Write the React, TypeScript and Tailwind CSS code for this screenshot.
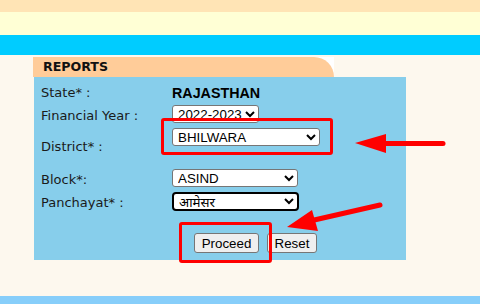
const selectCls =
  'border border-[#767676] rounded-[3px] bg-white text-black text-[13.33px] font-["Liberation_Sans","Noto_Sans",sans-serif] pl-[1px]';

export default function App() {
  return (
    <div className="relative w-[480px] h-[304px] bg-[#fdf8ee] flex flex-col overflow-hidden font-['DejaVu_Sans',Verdana,sans-serif]">
      <div className="h-[12px] bg-[#ffe4b5]" />
      <div className="h-[23px] bg-[#ffffd5]" />
      <div className="h-[20px] bg-[#00ccff]" />

      {/* tab */}
      <div className="ml-[33px] mt-[2px] w-[301px] h-[20px] bg-white">
        <div className="h-full bg-[#ffcc99] rounded-tr-[21px] pl-[10px] text-[12.6px] leading-[20px] font-bold text-[#111]">
          REPORTS
        </div>
      </div>

      {/* form panel */}
      <div className="ml-[34px] w-[372px] h-[183px] bg-[#87ceeb] pl-[7px] pt-[7px] text-[13px] text-[#1a1a1a]">
        <div className="grid grid-cols-[131px_1fr]">
          <div className="leading-[18px]">State* :</div>
          <div className="leading-[18px] text-[14.3px] font-bold font-['Liberation_Sans',Arial,sans-serif] text-black">
            RAJASTHAN
          </div>
        </div>

        <div className="grid grid-cols-[131px_1fr] mt-[3px]">
          <div className="leading-[21px]">Financial Year :</div>
          <div>
            <select className={`${selectCls} w-[87px] h-[18px]`} defaultValue="2022-2023">
              <option>2022-2023</option>
            </select>
          </div>
        </div>

        <div className="grid grid-cols-[131px_1fr] mt-[2px]">
          <div className="pt-[10px] leading-[18px]">District* :</div>
          <div>
            <select className={`${selectCls} w-[148px] h-[18px]`} defaultValue="BHILWARA">
              <option>BHILWARA</option>
            </select>
          </div>
        </div>

        <div className="grid grid-cols-[131px_1fr] mt-[13px]">
          <div className="leading-[21px]">Block*:</div>
          <div>
            <select className={`${selectCls} w-[126px] h-[18px]`} defaultValue="ASIND">
              <option>ASIND</option>
            </select>
          </div>
        </div>

        <div className="grid grid-cols-[131px_1fr] mt-[2px]">
          <div className="leading-[21px]">Panchayat* :</div>
          <div>
            <select
              className={`${selectCls} w-[127px] h-[19px] !border-2 !border-black !rounded-[4px]`}
              defaultValue="आमेसर"
            >
              <option>आमेसर</option>
            </select>
          </div>
        </div>

        <div className="flex gap-2 mt-[20px] pl-[153px] font-['Liberation_Sans',Arial,sans-serif] text-[13.33px] text-black">
          <button className="w-[65px] h-[20px] bg-[#efefef] border border-[#767676] rounded-[3px]">Proceed</button>
          <button className="w-[50px] h-[20px] bg-[#efefef] border border-[#767676] rounded-[3px]">Reset</button>
        </div>
      </div>

      <div className="flex-1" />
      <div className="h-[8px] bg-[#87cefa]" />

      {/* annotations */}
      <svg className="absolute inset-0 pointer-events-none" width="480" height="304" viewBox="0 0 480 304">
        <rect x="162.5" y="119.5" width="169" height="34" rx="1.5" fill="none" stroke="#ff0000" strokeWidth="3" />
        <rect x="180.5" y="223.5" width="90" height="38" rx="1.5" fill="none" stroke="#ff0000" strokeWidth="3" />
        <line x1="443" y1="143.5" x2="383" y2="143.5" stroke="#ff0000" strokeWidth="5" strokeLinecap="round" />
        <polygon points="355,143 386,134 386,153" fill="#ff0000" />
        <line x1="380" y1="205" x2="312" y2="220.5" stroke="#ff0000" strokeWidth="5" strokeLinecap="round" />
        <polygon points="287,227 312,210 318,231" fill="#ff0000" />
      </svg>
    </div>
  );
}
